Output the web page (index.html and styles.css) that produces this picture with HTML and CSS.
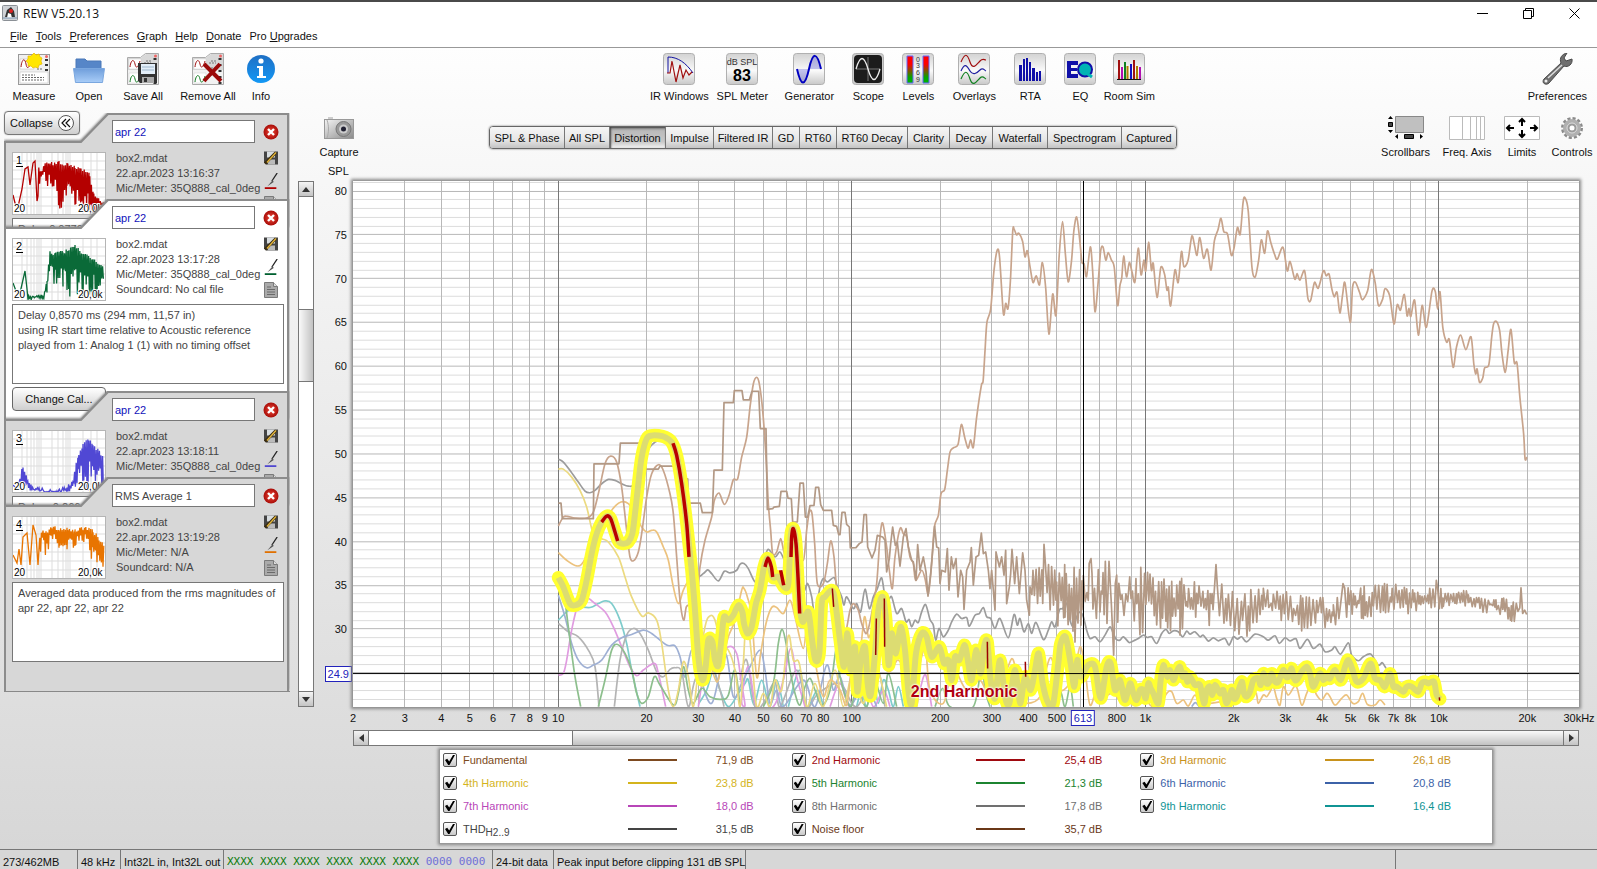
FILE: index.html
```html
<!DOCTYPE html>
<html lang="en">
<head>
    <meta charset="UTF-8">
    <meta name="viewport" content="width=device-width, initial-scale=1.0">
    <title>REW V5.20.13</title>
    <link rel="stylesheet" href="styles.css">
</head>
<body>

    <!-- shared icons -->
    <svg class="defs" width="0" height="0">
        <defs>
            <linearGradient id="tile" x1="0" y1="0" x2="0" y2="1">
                <stop offset="0" stop-color="#d2d2d2"/><stop offset=".55" stop-color="#fafafa"/><stop offset="1" stop-color="#c8c8c8"/>
            </linearGradient>
            <linearGradient id="meter" x1="0" y1="0" x2="0" y2="1">
                <stop offset="0" stop-color="#f00"/><stop offset=".3" stop-color="#f00"/><stop offset=".8" stop-color="#00a800"/><stop offset="1" stop-color="#00b400"/>
            </linearGradient>
            <linearGradient id="folder" x1="0" y1="0" x2="0" y2="1">
                <stop offset="0" stop-color="#6f9edb"/><stop offset="1" stop-color="#a9cdf8"/>
            </linearGradient>
            <linearGradient id="blue" x1="0" y1="0" x2="0" y2="1">
                <stop offset="0" stop-color="#1f6fc4"/><stop offset="1" stop-color="#1398f5"/>
            </linearGradient>
            <linearGradient id="metal" x1="0" y1="0" x2="1" y2="1">
                <stop offset="0" stop-color="#f4f4f4"/><stop offset="1" stop-color="#8a8a8a"/>
            </linearGradient>
            <radialGradient id="red"><stop offset="0" stop-color="#f04a3a"/><stop offset="1" stop-color="#a80c08"/></radialGradient>
            <symbol id="i-close" viewBox="0 0 16 16">
                <circle cx="8" cy="8" r="7.500" fill="url(#red)"/>
                <path d="M5 5l6 6M11 5l-6 6" stroke="#fff" stroke-width="2.400"/>
            </symbol>
            <symbol id="i-disk" viewBox="0 0 16 15">
                <path d="M1 1h14v13H3l-2-2z" fill="#444"/><path d="M4 1h8v6H4z" fill="#d8dde0"/><path d="M5 9h7v5H5z" fill="#bbb"/>
                <path d="M13 2L2 13" stroke="#3a2c10" stroke-width="3"/><path d="M13 2L4 12" stroke="#e2b53c" stroke-width="1.400"/>
            </symbol>
            <symbol id="i-pen" viewBox="0 0 16 18">
                <path d="M15 0L9 9" stroke="#222" stroke-width="1.500"/><path d="M10 8l-6 7 7-5z" fill="#555"/><path d="M1 17h13" stroke="currentColor" stroke-width="2"/>
            </symbol>
            <symbol id="i-doc" viewBox="0 0 16 16">
                <path d="M1.500.5h9l4 4v11h-13z" fill="#aaa" stroke="#7a7a7a"/><path d="M10.500.5v4h4" fill="#ddd" stroke="#7a7a7a"/>
                <path d="M4 5h4M4 7.500h8M4 10h8M4 12.500h8" stroke="#6a6a6a"/>
            </symbol>
            <symbol id="i-cards" viewBox="0 0 32 32">
                <path d="M.5 31.500v-27h13l5-4h13v31z" fill="#f2f2f2" stroke="#aaa"/>
                <path d="M1 5h13l5-4h12v16H1z" fill="#d8d8d8"/>
                <path d="M2 6h12v10H2zM2 20h12v10H2z" fill="#fff" stroke="#ccc" stroke-width=".5"/>
                <path d="M3 14c1-8 4-8 5-3s3 4 5-3" fill="none" stroke="#a01010"/>
                <path d="M3 29c1-8 4-8 5-3s3 4 5-3" fill="none" stroke="#107a20"/>
                <path d="M19 8h6M17 10h7M19 15h6M18 22h6" stroke="#777" stroke-dasharray="2 1"/>
                <path d="M28 5v26" stroke="#333" stroke-width="3" stroke-dasharray="2 4"/>
                <circle cx="28.500" cy="3" r="1.500" fill="#e66"/>
            </symbol>
        </defs>
    </svg>

    <header class="titlebar">
        <svg width="16" height="16" viewBox="0 0 16 16">
            <rect x=".5" y=".5" width="15" height="15" rx="1" fill="#cfd2d6" stroke="#8b9096"/>
            <path d="M3 12l2-7 4-3 3 4 1 6z" fill="#333"/><path d="M5 13l1-5 3 1 1 4z" fill="#fff"/><circle cx="9" cy="6" r="2" fill="#d22"/>
            <path d="M1 13h14" stroke="#7d98b5"/>
        </svg>
        <h1>REW V5.20.13</h1>
        <div class="window-buttons">
            <button aria-label="Minimize"><svg width="11" height="11"><path d="M0 5.500h11" stroke="#000"/></svg></button>
            <button aria-label="Restore"><svg width="11" height="11"><path d="M.5 2.500h8v8h-8zM2.500 2.500v-2h8v8h-2" fill="none" stroke="#000"/></svg></button>
            <button aria-label="Close"><svg width="11" height="11"><path d="M.5.5l10 10M10.500.5l-10 10" stroke="#000"/></svg></button>
        </div>
    </header>

    <nav class="menubar">
        <a href="#"><u>F</u>ile</a>
        <a href="#"><u>T</u>ools</a>
        <a href="#"><u>P</u>references</a>
        <a href="#"><u>G</u>raph</a>
        <a href="#"><u>H</u>elp</a>
        <a href="#"><u>D</u>onate</a>
        <a href="#">Pro <u>U</u>pgrades</a>
    </nav>

    <div class="toolbar">
        <div class="tools tools-file">
            <button class="tool">
                <svg width="32" height="32" viewBox="0 0 32 32">
                    <rect x=".5" y="1.500" width="31" height="30" fill="#f0f0f0" stroke="#999"/>
                    <path d="M2 6h14v10H2z" fill="#fff" stroke="#bbb" stroke-width=".5"/><path d="M2 19h28v11H2z" fill="#fff" stroke="#bbb" stroke-width=".5"/>
                    <path d="M3 14c1-9 4-9 5-3s3 4 6-3" fill="none" stroke="#a01010"/>
                    <path d="M4 22h13M4 24.500h22M4 27h22M19 16h6" stroke="#666" stroke-dasharray="2 1"/>
                    <path d="M28.500 6v12" stroke="#333" stroke-width="3" stroke-dasharray="2 3"/><circle cx="28.500" cy="3.500" r="1.500" fill="#e66"/>
                    <path d="M16 0l2 2 3-1 1 3 2 1-1 3 1 3-3 1-1 3-3-1-2 1-2-2-3 0 0-3-2-2 2-2 0-3 3 0z" fill="#ffe600" stroke="#e8b800" stroke-width=".7"/>
                </svg>
                Measure
            </button>
            <button class="tool">
                <svg width="32" height="32" viewBox="0 0 32 32">
                    <path d="M3 6h9l2 2h14v10H3z" fill="#5686c8" stroke="#4a78b8"/><path d="M.5 15.500h31l-2 14h-27z" fill="url(#folder)" stroke="#7aa7df"/>
                </svg>
                Open
            </button>
            <button class="tool">
                <svg width="32" height="32" viewBox="0 0 32 32">
                    <use href="#i-cards"/><path d="M11 10h19v20H13l-2-2z" fill="#333"/><path d="M14 11h14v10H14z" fill="#e3eef8"/><path d="M15 14h12M15 17h12" stroke="#9db6cc"/>
                    <path d="M15 24h12v6H15z" fill="#aaa"/><path d="M17 25h3v4h-3z" fill="#333"/>
                </svg>
                Save All
            </button>
            <button class="tool">
                <svg width="32" height="32" viewBox="0 0 32 32"><use href="#i-cards"/><path d="M12 11l17 17M28 11L12 28" stroke="#9c0a0a" stroke-width="4"/></svg>
                Remove All
            </button>
            <button class="tool">
                <svg width="32" height="32" viewBox="0 0 32 32">
                    <circle cx="16" cy="16" r="14" fill="url(#blue)"/><circle cx="16" cy="8" r="2.600" fill="#fff"/>
                    <path d="M12 13h6v10h3v2h-9v-2h2v-8h-2z" fill="#fff"/>
                </svg>
                Info
            </button>
        </div>
        <div class="tools tools-windows">
            <button class="tool">
                <svg width="32" height="32" viewBox="0 0 32 32"><rect x=".5" y=".5" width="31" height="31" rx="3" fill="url(#tile)" stroke="#b0b0b0"/>
                    <path d="M5 4v16M5 4c10 0 18 6 25 16" fill="none" stroke="#1010a0"/><path d="M4 20h3l2-12 4 21 4-17 3 13 3-8 3 5 3-3" fill="none" stroke="#a01010" stroke-width="1.200"/></svg>
                IR Windows
            </button>
            <button class="tool">
                <svg width="32" height="32" viewBox="0 0 32 32"><rect x=".5" y=".5" width="31" height="31" rx="3" fill="url(#tile)" stroke="#b0b0b0"/>
                    <text x="16" y="12" font-size="9" text-anchor="middle" fill="#333">dB SPL</text><text x="16" y="28" font-size="16" font-weight="bold" text-anchor="middle">83</text></svg>
                SPL Meter
            </button>
            <button class="tool">
                <svg width="32" height="32" viewBox="0 0 32 32"><rect x=".5" y=".5" width="31" height="31" rx="3" fill="url(#tile)" stroke="#b0b0b0"/>
                    <path d="M4 16h24c-4-17-8-17-12 0-4 18-8 18-12 0" fill="#0000c0" opacity=".22"/><path d="M4 16c4 18 8 18 12 0s8-17 12 0" fill="none" stroke="#0000c0" stroke-width="2"/></svg>
                Generator
            </button>
            <button class="tool">
                <svg width="32" height="32" viewBox="0 0 32 32"><rect x=".5" y=".5" width="31" height="31" rx="3" fill="#ccc" stroke="#b0b0b0"/><rect x="2" y="2" width="28" height="28" rx="4" fill="#1c1c1c"/>
                    <path d="M16 4v24M4 16h24" stroke="#777"/><path d="M4 16c4-14 8-14 12 0s8 14 12 0" fill="none" stroke="#eee" stroke-width="1.300"/></svg>
                Scope
            </button>
            <button class="tool">
                <svg width="32" height="32" viewBox="0 0 32 32"><rect x=".5" y=".5" width="31" height="31" rx="3" fill="url(#tile)" stroke="#b0b0b0"/>
                    <path d="M5 3h6v27H5zM21 3h6v27h-6z" fill="url(#meter)" stroke="#66f"/>
                    <g font-size="7" text-anchor="middle" fill="#333"><text x="16" y="9">0</text><text x="16" y="15">3</text><text x="16" y="22">6</text><text x="16" y="29">9</text></g></svg>
                Levels
            </button>
            <button class="tool">
                <svg width="32" height="32" viewBox="0 0 32 32"><rect x=".5" y=".5" width="31" height="31" rx="3" fill="url(#tile)" stroke="#b0b0b0"/>
                    <g fill="none" stroke-width="1.200"><path d="M3 9c4-9 6-9 9 0s7 2 10-1 4-1 6-1" stroke="#a01010"/><path d="M3 18c4-9 6-5 9 0s7 2 10-1 4 0 6 1" stroke="#2020a0"/><path d="M3 26c4-9 6-9 9 0s7 2 10-1 4 0 6 1" stroke="#108020"/></g></svg>
                Overlays
            </button>
            <button class="tool">
                <svg width="32" height="32" viewBox="0 0 32 32"><rect x=".5" y=".5" width="31" height="31" rx="3" fill="url(#tile)" stroke="#b0b0b0"/>
                    <path d="M5 12h3v16H5zM9 6h2v22H9zM12 5h2v23h-2zM15 9h2v19h-2zM18 15h3v13h-3zM22 19h2v9h-2zM25 18h2v10h-2z" fill="#1010a8"/></svg>
                RTA
            </button>
            <button class="tool">
                <svg width="32" height="32" viewBox="0 0 32 32"><rect x=".5" y=".5" width="31" height="31" rx="3" fill="url(#tile)" stroke="#b0b0b0"/>
                    <path d="M3 8h11v4H7v3h6v3H7v3h7v4H3z" fill="#1010a8"/><circle cx="21" cy="16.500" r="7" fill="#00b4b4" stroke="#1010a8" stroke-width="2"/><path d="M21 19l7 5" stroke="#00b4b4" stroke-width="3"/></svg>
                EQ
            </button>
            <button class="tool">
                <svg width="32" height="32" viewBox="0 0 32 32"><rect x=".5" y=".5" width="31" height="31" rx="3" fill="url(#tile)" stroke="#b0b0b0"/>
                    <g stroke-width="2"><path d="M6 7v19M21 7v19" stroke="#a01010"/><path d="M9 14v12" stroke="#b010b0"/><path d="M12 9v17" stroke="#108020"/><path d="M14.500 13v13M24 13v13" stroke="#b08000"/><path d="M18 11v15" stroke="#1010c0"/><path d="M27 14v12" stroke="#b010b0"/></g><path d="M4 26.500h24" stroke="#111"/></svg>
                Room Sim
            </button>
        </div>
        <div class="tools">
            <button class="tool">
                <svg width="32" height="32" viewBox="0 0 32 32"><path d="M3 26L20 10c-2-5 1-9 6-10l-3 5 2 3 6-2c1 5-4 9-8 7L8 30c-3 3-8 0-5-4z" fill="#707070" stroke="#4a4a4a"/><path d="M7 25L21 12" stroke="#ddd" stroke-width="1.500"/><circle cx="5" cy="28" r="1.500" fill="#eee"/></svg>
                Preferences
            </button>
        </div>
    </div>

    <main>
        <aside class="sidebar">
            <button class="collapse">Collapse
                <svg width="16" height="16" viewBox="0 0 16 16"><circle cx="8" cy="8" r="7.500" fill="#fff" stroke="#555"/><path d="M8 4L4 8l4 4M12 4L8 8l4 4" fill="none" stroke="#111" stroke-width="1.200"/></svg>
            </button>
            <div class="cards">
                <section class="card">
                    <svg class="tab"><path d="M1 500V29H77L104 1H284V500"/></svg>
                    <input class="name" aria-label="Name" value="apr 22">
                    <svg class="thumb" data-n="1" width="92" height="61" viewBox="0 0 92 61"></svg>
                    <p class="info">box2.mdat<br>22.apr.2023 13:16:37<br>Mic/Meter: 35Q888_cal_0deg<br>Soundcard: No cal file</p>
                    <div class="actions c1"><svg><use href="#i-close"/></svg><svg><use href="#i-disk"/></svg><svg><use href="#i-pen"/></svg><svg><use href="#i-doc"/></svg></div>
                    <textarea class="notes" aria-label="Notes">Delay 0,0770 ms</textarea>
                </section>
                <section class="card open">
                    <svg class="tab"><path d="M1 500V29H77L104 1H284V500"/></svg>
                    <input class="name" aria-label="Name" value="apr 22">
                    <svg class="thumb" data-n="2" width="92" height="61" viewBox="0 0 92 61"></svg>
                    <p class="info">box2.mdat<br>22.apr.2023 13:17:28<br>Mic/Meter: 35Q888_cal_0deg<br>Soundcard: No cal file</p>
                    <div class="actions c2"><svg><use href="#i-close"/></svg><svg><use href="#i-disk"/></svg><svg><use href="#i-pen"/></svg><svg><use href="#i-doc"/></svg></div>
                    <textarea class="notes" aria-label="Notes">Delay 0,8570 ms (294 mm, 11,57 in)
using IR start time relative to Acoustic reference
played from 1: Analog 1 (1) with no timing offset</textarea>
                    <button class="cal">Change Cal...</button>
                </section>
                <section class="card">
                    <svg class="tab"><path d="M1 500V29H77L104 1H284V500"/></svg>
                    <input class="name" aria-label="Name" value="apr 22">
                    <svg class="thumb" data-n="3" width="92" height="61" viewBox="0 0 92 61"></svg>
                    <p class="info">box2.mdat<br>22.apr.2023 13:18:11<br>Mic/Meter: 35Q888_cal_0deg<br>Soundcard: No cal file</p>
                    <div class="actions c3"><svg><use href="#i-close"/></svg><svg><use href="#i-disk"/></svg><svg><use href="#i-pen"/></svg><svg><use href="#i-doc"/></svg></div>
                    <textarea class="notes" aria-label="Notes">Delay -0,266 ms</textarea>
                </section>
                <section class="card last">
                    <svg class="tab"><path d="M1 500V29H77L104 1H284V500"/></svg>
                    <input class="name average" aria-label="Name" value="RMS Average 1">
                    <svg class="thumb" data-n="4" width="92" height="61" viewBox="0 0 92 61"></svg>
                    <p class="info">box2.mdat<br>22.apr.2023 13:19:28<br>Mic/Meter: N/A<br>Soundcard: N/A</p>
                    <div class="actions c4"><svg><use href="#i-close"/></svg><svg><use href="#i-disk"/></svg><svg><use href="#i-pen"/></svg><svg><use href="#i-doc"/></svg></div>
                    <textarea class="notes" aria-label="Notes">Averaged data produced from the rms magnitudes of
apr 22, apr 22, apr 22</textarea>
                </section>
            </div>
        </aside>

        <div class="graph-head">
            <button class="tool capture">
                <svg width="30" height="24" viewBox="0 0 30 24"><path d="M4 1h5v3H4z" fill="#ccc"/><rect x=".5" y="3.500" width="29" height="19" fill="url(#metal)" stroke="#999"/><path d="M3 4c2 6 2 12 0 18" fill="none" stroke="#aaa"/>
                    <circle cx="19.500" cy="13" r="7.500" fill="#999" stroke="#777"/><circle cx="19.500" cy="13" r="4.500" fill="#ccc"/><circle cx="19.500" cy="13" r="2.500" fill="#223"/></svg>
                Capture
            </button>
            <div class="tabs">
                <button>SPL &amp; Phase</button><button>All SPL</button><button class="active">Distortion</button><button>Impulse</button><button>Filtered IR</button><button>GD</button><button>RT60</button><button>RT60 Decay</button><button>Clarity</button><button>Decay</button><button>Waterfall</button><button>Spectrogram</button><button>Captured</button>
            </div>
            <div class="tools view-tools">
                <button class="tool">
                    <svg width="36" height="24" viewBox="0 0 36 24"><path d="M7.500.5h28v16h-28z" fill="#c0c0c0" stroke="#888"/><path d="M0 3l2.500-3L5 3zM0 14h5l-2.500 3zM10 18v5l-3-2.500zM32 18v5l3-2.500z"/><path d="M.5 6.500h4v4h-4zM16.500 18.500h9v4h-9z" fill="#444" stroke="#000"/></svg>
                    Scrollbars
                </button>
                <button class="tool">
                    <svg width="36" height="24" viewBox="0 0 36 24"><path d="M.5.5h35v23H.5zM13.500 0v24M21.500 0v24M27.500 0v24M31.500 0v24" fill="#fff" stroke="#bbb"/></svg>
                    Freq. Axis
                </button>
                <button class="tool">
                    <svg width="36" height="24" viewBox="0 0 36 24"><path d="M.5.5h35v23H.5z" fill="#fff" stroke="#bbb"/><path d="M18 3v7M15 6l3-3 3 3M18 21v-7M15 18l3 3 3-3M3 12h7M6 9l-3 3 3 3M33 12h-7M30 9l3 3-3 3" fill="none" stroke="#000" stroke-width="2"/></svg>
                    Limits
                </button>
                <button class="tool">
                    <svg width="24" height="24" viewBox="0 0 24 24"><circle cx="12" cy="12" r="9.500" fill="none" stroke="#8a8a8a" stroke-width="3" stroke-dasharray="3 2"/><circle cx="12" cy="12" r="9" fill="#b0b0b0"/><circle cx="12" cy="12" r="5" fill="#9a9a9a" stroke="#ddd"/><circle cx="12" cy="12" r="2.500" fill="#fff"/></svg>
                    Controls
                </button>
            </div>
            <span class="axis-title">SPL</span>
        </div>

        <div class="vscroll">
            <button aria-label="Up"><svg width="8" height="5"><path d="M0 5l4-5 4 5z"/></svg></button>
            <div class="track"><div class="thumb-v"></div></div>
            <button aria-label="Down"><svg width="8" height="5"><path d="M0 0h8L4 5z"/></svg></button>
        </div>

        <div class="y-axis" id="yAxis"></div>
        <div class="plot">
            <svg id="plot" viewBox="0 0 1226 527" preserveAspectRatio="none"></svg>
            <span class="trace-label">2nd Harmonic</span>
        </div>
        <div class="x-axis" id="xAxis"></div>

        <div class="hscroll">
            <button aria-label="Left"><svg width="5" height="8"><path d="M5 0v8L0 4z"/></svg></button>
            <div class="track"><div class="thumb-h"></div></div>
            <button aria-label="Right"><svg width="5" height="8"><path d="M0 0v8l5-4z"/></svg></button>
        </div>

        <div class="legend">
            <div class="entry fundamental"><input type="checkbox" id="l1" checked><label for="l1">Fundamental</label><i></i><span>71,9 dB</span></div>
            <div class="entry h2"><input type="checkbox" id="l2" checked><label for="l2">2nd Harmonic</label><i></i><span>25,4 dB</span></div>
            <div class="entry h3"><input type="checkbox" id="l3" checked><label for="l3">3rd Harmonic</label><i></i><span>26,1 dB</span></div>
            <div class="entry h4"><input type="checkbox" id="l4" checked><label for="l4">4th Harmonic</label><i></i><span>23,8 dB</span></div>
            <div class="entry h5"><input type="checkbox" id="l5" checked><label for="l5">5th Harmonic</label><i></i><span>21,3 dB</span></div>
            <div class="entry h6"><input type="checkbox" id="l6" checked><label for="l6">6th Harmonic</label><i></i><span>20,8 dB</span></div>
            <div class="entry h7"><input type="checkbox" id="l7" checked><label for="l7">7th Harmonic</label><i></i><span>18,0 dB</span></div>
            <div class="entry h8"><input type="checkbox" id="l8" checked><label for="l8">8th Harmonic</label><i></i><span>17,8 dB</span></div>
            <div class="entry h9"><input type="checkbox" id="l9" checked><label for="l9">9th Harmonic</label><i></i><span>16,4 dB</span></div>
            <div class="entry thd"><input type="checkbox" id="l10" checked><label for="l10">THD<sub>H2..9</sub></label><i></i><span>31,5 dB</span></div>
            <div class="entry noise"><input type="checkbox" id="l11" checked><label for="l11">Noise floor</label><i></i><span>35,7 dB</span></div>
        </div>
    </main>

    <footer class="status">
        <span class="memory">273/462MB</span>
        <span class="rate">48 kHz</span>
        <span class="format">Int32L in, Int32L out</span>
        <span class="bits">XXXX XXXX XXXX XXXX XXXX XXXX <b>0000 0000</b></span>
        <span class="depth">24-bit data</span>
        <span class="peak">Peak input before clipping 131 dB SPL</span>
        <span class="spare"></span>
        <span></span>
    </footer>

    <script src="script.js"></script>
</body>
</html>
```
FILE: styles.css
```css
* {
    box-sizing: border-box;
}
body {
    margin: 0;
    min-height: 100vh;
    display: flex;
    flex-direction: column;
    font-family: "Liberation Sans", Arial, sans-serif;
    font-size: 11px;
    color: #111;
    background: linear-gradient(#fefefe 47px, #f6f6f6 200px, #d6d6d6);
    border-top: 2px solid #4a4a4a;
    overflow: hidden;
}
button {
    font: inherit;
    color: inherit;
    padding: 0;
    border: 0;
    background: none;
    white-space: nowrap;
}
svg {
    display: block;
}
.defs {
    position: absolute;
}

/* title and menu */
.titlebar {
    display: flex;
    align-items: center;
    height: 22px;
    padding-left: 2px;
    background: #fff;
}
.titlebar h1 {
    margin: 0 auto 0 5px;
    font: 12px "Open Sans", "Noto Sans", sans-serif;
}
.window-buttons {
    display: flex;
}
.window-buttons button {
    width: 46px;
    display: grid;
    place-items: center;
}
.menubar {
    display: flex;
    gap: 8px;
    height: 24px;
    line-height: 24px;
    padding-left: 10px;
    background: #fff;
    border-bottom: 1px solid #999;
}
.menubar a {
    color: #111;
    text-decoration: none;
}

/* toolbars */
.toolbar {
    display: flex;
    justify-content: space-between;
    height: 60px;
    padding: 5px 10px 0;
}
.tools {
    display: grid;
    align-items: start;
}
.tools-file {
    grid-template-columns: 48px 62px 46px 84px 22px;
}
.tools-windows {
    grid-template-columns: 64px 62px 72px 46px 54px 58px 54px 46px 52px;
    margin-left: 3px;
}
.tool {
    display: flex;
    flex-direction: column;
    align-items: center;
    gap: 5px;
    line-height: 13px;
}

main {
    flex: 1;
    display: grid;
    grid-template-columns: 298px 16px 39px 1fr 18px;
    grid-template-rows: 73px 1fr 23px 16px 103px;
}

/* measurements */
.sidebar {
    grid-column: 1;
    grid-row: 1 / 6;
    padding: 3px 0 0 4px;
}
.collapse {
    display: flex;
    align-items: center;
    gap: 5px;
    height: 24px;
    padding: 0 5px;
    border: 1px solid #777;
    border-radius: 4px;
    background: linear-gradient(#fff, #cfcfcf);
    box-shadow: 0 0 1px #888;
}
.cards {
    margin-top: -22px;
    pointer-events: none;
}
.card {
    position: relative;
    width: 286px;
    height: 115px;
    margin-bottom: -29px;
    padding: 7px 5px 0 8px;
    display: grid;
    grid-template-columns: 100px 144px 1fr;
    grid-template-rows: 32px 66px 80px auto;
    align-items: start;
    overflow: hidden;
    color: #444;
}
.card.open {
    height: 221px;
}
.card.last {
    height: 215px;
    border-bottom: 1px solid #888;
}
.tab {
    position: absolute;
    inset: 0;
    width: 100%;
    height: 100%;
    filter: drop-shadow(0 -1px 1px #888);
}
.tab path {
    fill: #d7d7d7;
    stroke: #8c8c8c;
    stroke-width: 2;
}
.open .tab path {
    fill: #fff;
}
.card > :not(.tab) {
    position: relative;
}
.name {
    grid-column: 2;
    width: 143px;
    height: 23px;
    padding: 0 2px;
    border: 1px solid #777;
    background: #fff;
    font: 11px "Liberation Sans", Arial, sans-serif;
    color: #11b;
}
.average {
    color: #444;
}
.thumb {
    grid-column: 1;
    grid-row: 2;
    border: 1px solid #b5b5b5;
    box-sizing: content-box;
    background: #fff;
}
.info {
    grid-column: 2;
    grid-row: 2;
    height: 60px;
    margin: -1px 0 0 4px;
    line-height: 15px;
    white-space: nowrap;
}
.actions {
    grid-column: 3;
    grid-row: 1 / 3;
    display: flex;
    flex-direction: column;
    gap: 7px;
    margin: 4px 0 0 7px;
}
.actions svg {
    width: 16px;
    height: 16px;
}
.actions svg:first-child {
    margin-bottom: 3px;
}
.c1 { color: #b00000; }
.c2 { color: #006030; }
.c3 { color: #5048d0; }
.c4 { color: #e07000; }
.notes {
    grid-column: 1 / 4;
    height: 80px;
    width: 272px;
    padding: 3px 5px;
    border: 1px solid #777;
    background: #fff;
    font: 11px/15px "Liberation Sans", Arial, sans-serif;
    color: #444;
    resize: none;
    overflow: hidden;
    white-space: pre;
}
.cal {
    grid-column: 1;
    width: 94px;
    height: 24px;
    margin-top: 3px;
    border: 1px solid #666;
    border-radius: 4px;
    background: linear-gradient(#fff, #cfcfcf);
    color: #111;
}

/* graph header */
.graph-head {
    grid-column: 2 / 6;
    grid-row: 1;
    position: relative;
    display: flex;
    align-items: flex-start;
    padding: 8px 5px 0 22px;
}
.capture {
    width: 38px;
}
.capture, .view-tools .tool {
    gap: 6px;
}
.tabs {
    display: grid;
    grid-template-columns: 74px 45px 56px 48px 59px 27px 37px 71px 42px 43px 55px 74px 55px;
    margin: 10px auto 0 131px;
    border: 1px solid #666;
    border-radius: 4px;
    box-shadow: 0 0 2px #666;
    overflow: hidden;
}
.tabs button {
    height: 21px;
    border-left: 1px solid #777;
    background: linear-gradient(#f6f6f6, #e6e6e6 60%, #c4c4c4);
}
.tabs button:first-child {
    border-left: 0;
}
.tabs .active {
    background: linear-gradient(#999, #bbb 20%, #c8c8c8 70%, #f2f2f2);
    box-shadow: inset 1px 1px 2px #444;
}
.view-tools {
    grid-template-columns: 51px 72px 38px 62px;
    margin-right: -11px;
}
.axis-title {
    position: absolute;
    left: 30px;
    bottom: 4px;
}

/* scrollbars */
.vscroll, .hscroll {
    display: flex;
    border: 1px solid #777;
    background: #fff;
}
.vscroll {
    grid-column: 2;
    grid-row: 2;
    flex-direction: column;
}
.hscroll {
    grid-column: 4;
    grid-row: 4;
}
.vscroll button, .hscroll button {
    width: 14px;
    height: 14px;
    display: grid;
    place-items: center;
    background: linear-gradient(#f4f4f4, #c4c4c4);
    fill: #333;
}
.track {
    flex: 1;
    display: flex;
}
.vscroll .track {
    flex-direction: column;
    border: solid #777;
    border-width: 1px 0;
}
.hscroll .track {
    border: solid #777;
    border-width: 0 1px;
}
.thumb-v {
    margin-top: 112px;
    height: 73px;
    border: solid #777;
    border-width: 1px 0;
    background: linear-gradient(90deg, #fafafa, #c2c2c2);
}
.thumb-h {
    width: 83%;
    margin-left: auto;
    border-left: 1px solid #777;
    background: linear-gradient(#fafafa, #c2c2c2);
}

/* plot */
.plot {
    grid-column: 4;
    grid-row: 2;
    position: relative;
    min-height: 300px;
    background: #fff;
    box-shadow: 0 0 3px 2px #888;
}
.plot svg {
    position: absolute;
    width: 100%;
    height: 100%;
}
.plot path {
    fill: none;
    vector-effect: non-scaling-stroke;
    stroke-linejoin: round;
}
.trace-label {
    position: absolute;
    left: 45.5%;
    top: 95.4%;
    font-size: 16px;
    font-weight: bold;
    line-height: 18px;
    color: #b00010;
    text-shadow: 0 0 2px #fff, 0 0 2px #fff, 0 0 3px #fff;
    white-space: nowrap;
}
.y-axis {
    grid-column: 3;
    grid-row: 2;
    position: relative;
}
.y-axis span {
    position: absolute;
    right: 6px;
    line-height: 14px;
    margin-top: -7px;
}
.x-axis {
    grid-column: 4;
    grid-row: 3;
    position: relative;
}
.x-axis span {
    position: absolute;
    top: 4px;
    line-height: 14px;
    transform: translateX(-50%);
}
.y-axis .cursor, .x-axis .cursor {
    padding: 0 2px;
    border: 1px solid #22b;
    background: #fff;
    color: #22b;
}
.y-axis .cursor {
    right: 1px;
    margin-top: -8px;
}
.x-axis .cursor {
    top: 3px;
}

/* legend */
.legend {
    grid-column: 2 / 6;
    grid-row: 5;
    align-self: start;
    display: grid;
    grid-template-columns: repeat(3, 1fr);
    row-gap: 3px;
    margin: 3px 104px 4px 141px;
    padding: 0 3px 4px;
    border: 1px solid #999;
    background: #fff;
    box-shadow: 0 0 3px 1px #888;
}
.entry {
    display: grid;
    grid-template-columns: 20px 1fr 49px 77px;
    align-items: center;
    height: 20px;
    margin-right: 38px;
}
.entry input {
    appearance: none;
    width: 14px;
    height: 14px;
    margin: 0;
    border: 1px solid #555;
    border-radius: 2px;
    background: linear-gradient(#fff, #c8c8c8);
}
.entry input:checked::before {
    content: "";
    display: block;
    width: 10px;
    height: 10px;
    margin: 1px;
    background: #000;
    clip-path: polygon(0 50%, 22% 38%, 42% 66%, 80% 0, 100% 0, 45% 100%, 32% 100%);
}
.entry i {
    height: 2px;
    background: currentColor;
}
.entry span {
    text-align: right;
}
.fundamental { color: #7d4a20; }
.h2 { color: #a00a10; }
.h3 { color: #c8921c; }
.h4 { color: #d4b41c; }
.h5 { color: #1c8430; }
.h6 { color: #3c62a8; }
.h7 { color: #b846b8; }
.h8 { color: #707070; }
.h9 { color: #109494; }
.thd { color: #444; }
.noise { color: #6a3818; }
sub {
    font-size: 10px;
    line-height: 0;
}

/* status bar */
.status {
    display: flex;
    height: 20px;
    border-top: 1px solid #777;
    background: #d7d7d7;
    line-height: 24px;
    overflow: hidden;
    white-space: nowrap;
}
.status span {
    padding-left: 3px;
    border-right: 1px solid #777;
}
.status span:last-child {
    flex: 1;
    border: 0;
}
.memory { width: 78px; }
.rate { width: 43px; }
.format { width: 103px; }
.bits {
    width: 269px;
    font-family: "DejaVu Sans Mono", monospace;
    color: #0a7a0a;
}
.bits b {
    font-weight: normal;
    color: #7070d8;
}
.depth { width: 61px; }
.peak { width: 192px; }
.status .spare {
    flex: 0 1 650px;
}
```
FILE: script.js
```js
var svg = document.getElementById("plot");
var W = 1226, H = 527;

function fx(f) { return Math.log10(f / 2) / Math.log10(15000) * W; }
function dy(db) { return 10 + (80 - db) * 8.78; }

function add(d, color, width, opacity) {
    var p = document.createElementNS("http://www.w3.org/2000/svg", "path");
    p.setAttribute("d", d);
    p.setAttribute("stroke", color);
    p.setAttribute("stroke-width", width || 1);
    if (opacity) p.setAttribute("opacity", opacity);
    svg.appendChild(p);
    return p;
}

// grid
for (var db = 22; db <= 81; db++) {
    add("M0 " + (Math.floor(dy(db)) + 0.5) + "H" + W, db % 5 ? "#dcdcdc" : "#b8b8b8");
}
for (var dec = 1; dec <= 10000; dec *= 10) {
    for (var m = 1; m < 10; m++) {
        var f = dec * m;
        if (f > 2 && f < 30000) add("M" + (Math.floor(fx(f)) + 0.5) + " 0V" + H, m == 1 ? "#777" : "#b8b8b8");
    }
}

// the traces are stored in panels, each with its own origin: [x, y, x scale], third of a pixel units
var panels = { A: [-24, 570, 1], B: [1161, 570, 1], C: [2331, 570, 1], D: [1521, -30, 1.41] };

function points(key, text) {
    var o = panels[key];
    return text.trim().split(/\s+/).map(function (s) {
        var v = s.split(",");
        return [(o[0] + v[0] * o[2]) / 3, (o[1] + Number(v[1])) / 3];
    });
}
function smooth(p, t) {
    var d = "M" + p[0];
    for (var i = 0; i < p.length - 1; i++) {
        var a = p[i - 1] || p[i], b = p[i], c = p[i + 1], e = p[i + 2] || c;
        d += "C" + (b[0] + (c[0] - a[0]) * t) + " " + (b[1] + (c[1] - a[1]) * t) + " " +
            (c[0] - (e[0] - b[0]) * t) + " " + (c[1] - (e[1] - b[1]) * t) + " " + c[0] + " " + c[1];
    }
    return d;
}
function join(parts) {
    var all = [];
    for (var i = 0; i < parts.length; i += 2) all = all.concat(points(parts[i], parts[i + 1]));
    return all;
}
function trace(color, width, t, parts) { return add(smooth(join(parts), t), color, width); }

var seed = 7;
function rnd() { seed = (seed * 16807) % 2147483647; return seed / 2147483647; }

// fill an envelope (x, top, bottom) with jagged noise
function jagged(env, step) {
    var e = env.trim().split(/\s+/).map(function (s) { return s.split(",").map(Number); }), out = "", n = 0;
    for (var i = 0; i < e.length - 1; i++) {
        for (var x = e[i][0]; x < e[i + 1][0]; x += step * (0.6 + rnd() * 0.9)) {
            var k = (x - e[i][0]) / (e[i + 1][0] - e[i][0]);
            var top = e[i][1] + (e[i + 1][1] - e[i][1]) * k, bot = e[i][2] + (e[i + 1][2] - e[i][2]) * k;
            var r = 0.5 + (n++ % 2 ? 0.7 : -0.65) * Math.pow(rnd(), 0.9);
            out += " " + x.toFixed(1) + "," + (top + (bot - top) * r).toFixed(1);
        }
    }
    return out;
}

// harmonics 9..3
trace("#7fcccc", 1.7, 0.17, ["A", "640,750 665,725 690,710 735,712 760,700 780,692 800,700 825,750 845,820 860,900 885,1010"]);
trace("#7fcccc", 1.7, 0.17, ["A", "1060,1003 1085,960 1105,905 1125,960 1150,1010 1180,970 1200,940", "B", "25,930 42,1005 65,930 90,1010 110,930 130,1010"]);
trace("#7fcccc", 1.7, 0.17, ["B", "145,1010 178,900 200,1010 232,960 250,1010"]);
trace("#7fcccc", 1.7, 0.17, ["B", "350,1010 365,960 380,1010 400,930 415,1000 430,930 445,960 460,1010 475,950 490,1010"]);
trace("#b4b4b4", 1.7, 0.17, ["A", "640,760 670,785 700,800 730,840 750,890 762,1010"]);
trace("#b4b4b4", 1.7, 0.17, ["A", "808,1010 825,870 845,795 865,775 885,790 910,840 935,905 955,920 975,898 990,893 1010,905 1030,1010 1050,930 1090,860 1125,960 1137,1010"]);
trace("#b4b4b4", 1.7, 0.17, ["B", "0,930 20,870 45,1010 70,1000 105,935 120,1010 170,900 200,1010 235,970 300,940 350,1010 410,900 435,1010"]);
trace("#e09ce0", 1.7, 0.17, ["A", "640,915 655,910 665,870 680,780 700,700 725,683 750,700 780,725 805,770 830,830 855,890 875,917 895,900 928,880 940,910 962,1010"]);
trace("#e09ce0", 1.7, 0.17, ["A", "1060,1010 1080,900 1115,880 1150,830 1175,850 1188,930 1200,1005", "B", "5,990 25,890 50,1010 100,1010 130,930 152,835 170,920 195,1010"]);
trace("#e09ce0", 1.7, 0.17, ["B", "270,1010 300,940 330,1010 370,930 400,1010 430,960 450,1010"]);
trace("#e09ce0", 1.7, 0.17, ["B", "530,1010 540,960 557,915 575,1010"]);
trace("#9fb0d4", 1.7, 0.17, ["A", "640,675 660,740 680,820 700,870 725,893 745,885 770,870 800,825 830,803 860,793 895,780 920,790 965,825 990,827 1005,860 1020,920 1040,840 1060,900 1100,1000 1140,850 1165,980 1190,940", "B", "30,890 60,840 75,900 90,1000 110,960 130,1010 190,930 225,1010 260,885 280,960 300,920 330,1005 375,940 410,1010"]);
trace("#9fb0d4", 1.7, 0.17, ["C", "185,1010 196,998 208,1010"]);
trace("#8dbf8d", 1.7, 0.17, ["A", "660,690 675,810 690,920 707,1010"]);
trace("#8dbf8d", 1.7, 0.17, ["A", "760,1010 780,930 800,840 818,823 840,850 860,900 875,970 890,1000 910,980 928,920 945,945 985,1005 1000,970 1015,890 1030,960 1045,1000 1070,955 1095,980 1130,988 1150,975 1170,900 1185,1010"]);
trace("#8dbf8d", 1.7, 0.17, ["B", "70,1010 100,940 115,820 127,778 140,830 150,900 165,970 180,1005 195,950 210,925 225,960 245,1005 270,960 290,830 300,920 330,1010 350,960 380,1010 400,920 430,1000 445,910 470,1010"]);
trace("#8dbf8d", 1.7, 0.17, ["B", "585,1010 608,955 630,1010 700,1010 725,880 735,960 750,1010"]);
trace("#8dbf8d", 1.7, 0.17, ["B", "940,1010 960,960 975,1010 990,950 1000,1010"]);
trace("#ecda80", 1.7, 0.17, ["A", "640,296 655,296 680,320 705,360 725,410 745,490 770,505 790,515 820,560 840,620 860,680 890,737 910,728 935,750 950,820 970,960 985,1010 1000,960 1015,875 1030,920 1045,1010 1060,900 1080,770 1095,737 1110,750 1130,830 1150,840 1170,900 1185,1010 1195,880", "B", "20,740 35,860 50,1010 70,970 90,1010 105,930 125,960 145,797 160,870 178,880 200,1010 225,940 250,1010 285,900 310,1010 340,900 370,1000 405,880 440,1010"]);
trace("#ecc27e", 1.7, 0.17, ["A", "640,547 665,570 695,587 715,575 740,520 770,480 800,420 828,395 850,400 870,430 890,470 905,485 920,480 935,485 955,530 970,570 985,650 1000,700 1015,660 1030,635 1050,650 1065,780 1090,860 1115,935 1130,880 1150,800 1170,750 1190,660", "B", "12,655 22,680 35,740 50,920 62,850 78,760 95,712 110,712 130,730 150,690 165,740 190,835 205,740 230,900 250,980 270,930 300,960 320,1005 335,900 350,940 368,780 375,740 385,800 395,800 410,920 425,840 440,900 455,900 475,870 500,920 520,1000 540,880 557,840 570,960 610,1000 640,900 680,960 720,930 760,1000 800,900 820,870 840,980 860,1000 900,980 918,900 935,865 960,960 1000,920 1020,830 1035,900 1050,1005 1070,960 1090,980 1120,970 1150,1005", "C", "0,1000 20,1005 45,960 60,1005 90,1005 110,970 125,965 140,1000 160,990 175,1008 195,975 210,1005 240,1000 300,990 370,970 380,975 385,1000 400,975 410,980 420,965 430,950 440,985 450,1005 460,950 475,975 498,948 515,1005 530,970 545,945 560,975 575,990 590,970 600,980 615,1005 635,985 650,975 668,1000 685,995 698,970 712,1003 735,1005 750,990 765,1005"]);

// THD
trace("#9c9c9c", 1.7, 0.15, ["A", "640,266 655,275 675,300 700,335 720,362 735,367 750,360 770,340 790,327 810,330 830,340 850,347 870,338 900,250 940,210 980,230 1010,350 1040,560 1060,615 1075,610 1088,599 1100,610 1120,632 1138,603 1155,608 1175,600", "B", "0,582 12,580 25,595 45,635 60,620 75,560 85,537 105,560 120,545 140,570 158,470 175,560 190,660 203,640 215,680 225,735 240,650 250,625 262,635 282,622 292,650 305,680 312,705 320,680 340,715 350,700 362,725 375,657 388,715 400,680 412,655 425,623 435,680 445,690 455,680 470,730 485,715 498,755 507,748 515,770 525,750 535,757 545,725 557,703 570,748 580,765 587,810 597,775 610,800 625,780 635,755 650,732 665,745 680,742 688,768 705,735 718,730 730,712 740,740 752,745 765,775 780,745 805,803 822,733 832,765 840,745 852,785 865,760 875,790 888,757 910,808 925,780 935,755 945,770 958,720 968,715 980,700 990,750 1000,770 1010,740 1020,725 1030,740 1040,780 1050,805 1065,800 1080,815 1095,795 1110,770 1120,790 1128,807 1140,810 1150,800 1165,815", "C", "0,817 15,810 25,805 40,795 52,802 65,800 80,820 95,790 108,778 118,790 130,782 145,785 158,800 170,783 180,792 195,785 210,800 220,795 235,813 250,803 265,812 285,805 297,825 310,800 322,807 335,800 350,815 375,792 400,800 415,810 435,797 448,820 465,803 480,812 498,806 510,835 532,808 550,835 570,822 585,845 605,840 615,830 632,852 655,818 665,855 685,872 700,860 722,852 745,885 757,878 768,895"]);

// fundamental
trace("#c8a48c", 1.7, 0.15, ["A", "640,467 655,440 668,438 690,443 725,443 745,425 760,370 780,280 797,257 815,275 830,350 845,480 855,560 866,571 880,545 890,490 905,380 920,310 940,283 955,300 975,370 985,430 995,560 1005,690 1016,750 1024,710 1035,705 1045,715 1058,670 1065,590 1080,510 1100,440 1108,390 1122,368 1138,402 1152,375 1165,328 1178,325", "B", "5,260 20,200 30,110 40,40 50,20 58,40 68,120 78,260 85,400 92,480 98,550 110,545 122,505 132,545 145,570 157,480 170,500 190,570 200,480 208,425 216,430 224,520 232,640 250,640 262,580 272,512 282,560 290,660 300,730 315,790 330,720 340,700 355,720 365,760 380,790 395,730 410,640 420,500 428,458 440,530 448,600 457,655 465,560 480,475 490,490 500,500 510,560 520,580 527,630 545,600 555,625 565,670 575,580 583,470 595,435 603,370 614,357 622,300 630,245 640,232 654,222 664,162 674,200 684,233 692,208 700,230 710,140 724,45", "D", "262,630 266,540 270,455 278,415 285,300 292,238 297,260 305,428 310,398 315,413 320,330 325,180 328,175 333,192 338,187 346,212 351,258 356,240 362,290 368,335 375,315 382,342 388,275 395,350 402,490 410,370 417,433 424,250 431,152 437,250 443,333 450,270 455,180 461,138 467,200 472,272 477,280 482,317 490,228 495,300 500,423 507,330 512,240 517,228 523,268 528,245 535,268 541,290 548,404 553,345 557,320 561,255 567,318 573,275 579,305 585,333 592,232 598,312 604,268 608,300 614,214 620,298 624,278 632,380 640,290 648,310 653,358 656,350 661,405 670,298 677,335 684,242 689,287 698,268 706,196 712,225 717,253 723,200 731,262 739,235 747,298 754,210 762,175 768,142 774,182 782,190 790,253 796,230 803,170 809,190 815,95 819,80 826,120 834,290 841,318 848,270 854,207 861,247 867,180 874,215 882,250 888,265 900,229 909,300 915,272 925,325 930,308 936,328 946,300 953,383 959,388 967,335 975,352 986,300 992,315 998,310 1004,355 1009,378 1015,365 1021,427 1027,370 1032,337 1043,455 1048,350 1054,334 1063,365 1069,387 1080,360 1088,296 1096,335 1103,404 1112,385 1117,354 1127,375 1136,460 1143,402 1150,418 1158,371 1164,435 1168,413 1172,437 1180,388 1188,493 1196,404 1205,470 1217,361 1224,362 1229,415 1234,363 1240,470 1248,514 1254,507 1262,590 1269,530 1278,493 1289,537 1300,498 1306,580 1310,610 1313,595 1318,635 1325,622 1329,592 1338,582 1344,500 1348,460 1354,452 1361,480 1366,550 1373,605 1379,540 1385,476 1392,575 1398,578 1404,680 1412,790 1415,865 1419,860"]);

// noise floor
trace("#b39985", 1.7, 0, ["A", "640,398 648,398 652,445 745,445 747,280 822,280 826,218 884,218 890,296 940,296 945,287 988,287 992,325 1028,325 1030,398 1066,398 1072,427 1102,427 1107,299 1132,299 1137,96 1165,96 1168,60",
    "B", "6,60 10,88 28,88 36,62 56,62 61,174 78,174 82,417 98,415 102,410 118,408 123,363 140,363 144,383 154,385 158,455 172,455 180,338 190,338 196,440 203,440 210,406 222,405 227,351 236,351 242,403 250,420 275,420 280,465 290,468 296,493 300,493 306,426 315,426 320,462 328,470 331,533 348,532 358,520 366,515 372,433 379,433 383,530 396,563 405,540 412,495 428,500 435,510 440,605 448,565 452,520 458,470 466,525 472,515 480,588 490,500 498,475 505,530 515,570 520,575 528,630 533,523 540,600 550,560 558,605 564,678 572,610 578,540 584,468 590,530 596,533 600,640 605,600 616,605 622,535 627,660 634,560 640,595 648,565 654,680 662,600 668,620 672,718 680,600 690,575 694,532 700,645 708,560 716,555 724,488 730,550 737,545 745,600 750,655 755,600 765,720 768,545 778,590 785,560 792,615 797,540 800,700 808,650 812,610 816,537 824,640 830,560 838,670 848,548 855,600 860,690 868,735"
        + jagged("870,600,700 909,595,700", 4) + " 912,522" + jagged("916,590,710 950,610,740 975,600,780 1005,610,795 1030,620,750 1048,600,740", 4) + " 1053,565" + jagged("1056,600,740 1080,610,720 1094,590,730", 4) + " 1096,573 1101,760 1107,573 1114,700 1121,855 1126,640" + jagged("1130,610,740 1170,605,740", 4),
    "C", jagged("0,600,720 25,600,780 60,620,720 110,630,775 150,640,775 200,650,740 254,650,750", 4) + " 258,583" + jagged("262,650,750 290,660,765 355,670,780 400,660,720 430,670,735 515,680,770 560,690,750 610,690,770 634,670,740", 5) + " 639,640" + jagged("644,655,740 700,660,740 760,645,720 830,650,720 880,655,710 915,645,710", 4) + " 919,630" + jagged("923,650,710 940,670,705 980,670,700 1015,660,700 1050,675,720 1100,690,720 1145,690,750 1170,700,735", 4) + " 1173,653 1178,730 1184,720 1190,733"]);

// 2nd harmonic, highlighted
var h2 = ["A", "640,622 655,650 675,700 692,705 710,690 725,630 740,550 755,490 770,455 785,437 797,445 810,485 822,515 835,520 850,515 862,490 870,430 880,340 890,260 905,205 920,195 940,195 960,200 980,215 995,255 1010,340 1025,460 1040,600 1050,720 1060,860 1072,930 1082,890 1090,810 1102,815 1110,870 1120,885 1130,800 1137,740 1150,750 1165,735 1180,705",
    "B", "7,725 12,760 22,790 35,770 48,700 60,660 72,590 84,565 98,620 115,620 132,650 145,640 152,500 160,475 168,520 178,700 188,755 205,725 215,800 226,870 238,850 245,700 255,680 275,660 285,690 300,810 312,890 322,790 332,900 345,830 352,965 362,870 375,830 383,940 392,975 405,850 415,720 428,680 438,750 446,885 455,790 468,850 482,770 495,840 505,960 515,1000 528,850 545,790 560,800 575,860 598,830 612,880 625,870 635,930 645,860 658,870 674,825 685,880 695,930 708,840 722,910 732,830 742,815 752,930 765,985 780,870 795,980 808,1000 825,900 840,1000 855,920 872,960 885,900 896,850 908,940 925,1000 940,1000 955,880 962,820 977,800 992,880 1003,950 1012,870 1022,920 1045,885 1065,890 1082,985 1100,890 1112,880 1125,960 1140,930 1155,990",
    "C", "0,940 10,970 20,990 30,960 40,960 47,985 55,940 62,955 70,970 85,1000 92,930 100,885 112,920 120,900 130,930 140,905 150,890 158,920 165,910 172,935 180,920 195,945 210,945 222,1000 230,960 240,950 247,975 255,945 270,970 280,960 290,1000 305,960 312,985 320,980 335,935 342,970 350,980 360,965 370,930 385,925 392,945 400,910 410,940 418,935 425,910 435,935 445,935 460,900 468,920 475,920 485,895 492,925 500,930 515,905 530,890 540,910 550,950 570,910 580,930 590,920 600,925 615,900 632,930 645,890 655,870 668,900 680,935 700,925 722,880 735,925 750,930 765,950 780,910 790,950 800,950 820,965 830,950 845,950 865,965 875,940 885,935 895,940 912,935 920,975 930,987"];
trace("#ffff30", 13, 0.15, h2).setAttribute("stroke-linecap", "round");
trace("#dcdc72", 6, 0.15, h2);

// parts of it above the other harmonics
[["A", "770,455 785,437 797,445 810,485 818,512"], ["A", "984,218 995,255 1010,340 1025,460 1032,560"],
 ["B", "75,590 84,563 94,590 98,620"], ["B", "122,600 131,645"], ["B", "153,560 155,500 160,475 168,520 174,620 179,730"]].forEach(function (r) {
    trace("#b80000", 3.5, 0.15, r);
});
[["B", "277,655 281,710"], ["B", "409,745 407,855"], ["B", "433,685 434,830"], ["B", "742,815 743,895"], ["B", "856,875 857,920"], ["C", "928,982 929,992"]].forEach(function (r) {
    trace("#9a0000", 1.5, 0, r);
});

// cursor
add("M0 493.5H" + W, "#000");
add("M730.5 0V" + H, "#000");

// axis labels
function label(axis, text, side, pos, cls) {
    var s = document.createElement("span");
    s.textContent = text;
    s.style[side] = pos + "%";
    if (cls) s.className = cls;
    document.getElementById(axis).appendChild(s);
}
for (var v = 80; v >= 30; v -= 5) label("yAxis", v, "top", dy(v) / H * 100);
label("yAxis", "24.9", "top", 493.5 / H * 100, "cursor");
[2, 3, 4, 5, 6, 7, 8, 9, 10, 20, 30, 40, 50, 60, 70, 80, 100, 200, 300, 400, 500, 800, 1000, 2000, 3000, 4000, 5000, 6000, 7000, 8000, 10000, 20000, 30000].forEach(function (f) {
    label("xAxis", f < 1000 ? f : f == 30000 ? "30kHz" : f / 1000 + "k", "left", fx(f) / W * 100);
});
label("xAxis", "613", "left", fx(613) / W * 100, "cursor");

// measurement thumbnails: a plain line first, then x, top, bottom of the dense part
var thumbs = {
    1: ["#b40000", "0,42 2,50 5,54 9,36 12,16 15,14 17,32 20,10 22,8 24,48", "25,12,50 29,16,22 33,8,30 40,9,44 46,8,58 54,10,58 62,12,60 68,14,61 76,16,61 80,38,61 91,50,61"],
    2: ["#0a6a38", "0,44 3,52 7,54 12,32 14,50", "15,54,61 30,56,61 34,40,58 37,12,36 42,12,50 50,11,58 56,9,60 62,6,54 70,12,61 80,18,61 91,26,61"],
    3: ["#5048d4", "0,54 4,58 7,48", "8,36,60 10,36,60 14,46,60 22,56,61 34,58,61 44,59,61 54,55,61 60,48,61 65,22,61 70,12,61 75,5,61 80,12,61 91,24,61"],
    4: ["#e87400", "0,38 4,46 6,32 8,48 10,20 14,16 17,48 20,8 23,18 25,48", "26,20,48 30,12,18 33,14,44 38,8,24 46,10,32 54,10,34 62,12,32 72,8,30 80,12,46 86,20,50 91,26,52"]
};
// every bar starts near the top of the envelope and drops a random way to the bottom
function bars(env) {
    var e = env.split(" ").map(function (s) { return s.split(",").map(Number); }), out = "", n = 0;
    for (var i = 0; i < e.length - 1; i++) {
        for (var x = e[i][0]; x < e[i + 1][0]; x += 0.8) {
            var k = (x - e[i][0]) / (e[i + 1][0] - e[i][0]);
            var top = e[i][1] + (e[i + 1][1] - e[i][1]) * k, bot = e[i][2] + (e[i + 1][2] - e[i][2]) * k;
            out += "L" + x.toFixed(1) + "," + (n++ % 2 ? top + rnd() * 4 : top + (bot - top) * (0.4 + 0.6 * rnd())).toFixed(1);
        }
    }
    return out;
}
document.querySelectorAll(".thumb").forEach(function (el) {
    var n = el.dataset.n, t = thumbs[n], grid = "";
    [9, 14, 18, 21, 24, 26, 28, 39, 45, 50, 53, 55, 57, 70, 78, 84].forEach(function (x) { grid += "M" + x + " 0V61"; });
    for (var y = 8; y < 61; y += 9) grid += "M0 " + y + "H92";
    el.innerHTML = '<path d="' + grid + '" stroke="#ddd" fill="none"/>' +
        '<path d="M' + t[1].split(" ").join("L") + bars(t[2]) + '" stroke="' + t[0] + '" stroke-width="1.3" fill="none"/>' +
        '<g font-size="10" stroke="#fff" stroke-width="2" paint-order="stroke"><text x="1" y="59">20</text><text x="65" y="59">20,0k</text>' +
        '<text x="3" y="11" font-size="11">' + n + '</text></g><path d="M3 13.500h7" stroke="#000"/>';
});
```
